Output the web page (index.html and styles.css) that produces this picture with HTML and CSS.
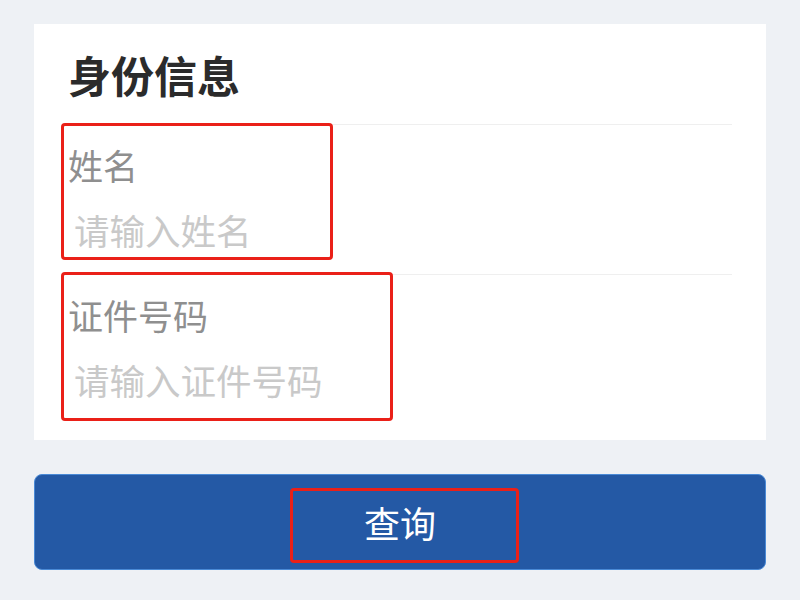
FILE: index.html
```html
<!DOCTYPE html>
<html lang="zh-CN">
<head>
<meta charset="utf-8">
<title>身份信息</title>
<link rel="stylesheet" href="styles.css">
</head>
<body>
  <main class="page">
    <section class="card">
      <h1 class="card-title">身份信息</h1>
      <div class="field">
        <label class="field-label" for="name">姓名</label>
        <input class="field-input" id="name" type="text" placeholder="请输入姓名">
        <span class="mark mark-name"></span>
      </div>
      <div class="field field-last">
        <label class="field-label" for="idno">证件号码</label>
        <input class="field-input" id="idno" type="text" placeholder="请输入证件号码">
        <span class="mark mark-id"></span>
      </div>
    </section>
    <button class="query-btn" type="button">
      <span class="query-text">查询</span>
      <span class="mark mark-btn"></span>
    </button>
  </main>
</body>
</html>
```
FILE: styles.css
```css
* {
  box-sizing: border-box;
}

html, body {
  margin: 0;
  padding: 0;
  background: #eef1f5;
}

body {
  width: 800px;
  height: 600px;
  overflow: hidden;
  font-family: "Noto Sans CJK SC", "Noto Sans", sans-serif;
}

.page {
  padding: 24px 34px 0;
  display: flex;
  flex-direction: column;
}

.card {
  background: #ffffff;
  padding: 0 34px 16px;
  display: flex;
  flex-direction: column;
}

.card-title {
  margin: 0;
  height: 101px;
  line-height: 101px;
  font-size: 43px;
  font-weight: 700;
  color: #2b2b2b;
  border-bottom: 1px solid #efefef;
}

.field {
  position: relative;
  display: flex;
  flex-direction: column;
  padding: 20px 0 22px;
  border-bottom: 1px solid #efefef;
}

.field-last {
  border-bottom: none;
}

.field-label {
  font-size: 35px;
  line-height: 40px;
  height: 40px;
  color: #8f8f8f;
}

.field-input {
  margin-top: 23px;
  height: 44px;
  border: none;
  outline: none;
  padding: 0 0 0 6px;
  background: transparent;
  font-family: inherit;
  font-size: 35.5px;
  line-height: 44px;
  color: #333;
}

.field-input::placeholder {
  color: #c9c9c9;
}

.mark {
  position: absolute;
  border: 3px solid #ea2018;
  border-radius: 4px;
  pointer-events: none;
}

.mark-name {
  top: -2px;
  left: -7px;
  width: 272px;
  height: 137px;
}

.mark-id {
  top: -3px;
  left: -7px;
  width: 332px;
  height: 149px;
}

.query-btn {
  position: relative;
  margin-top: 34px;
  height: 96px;
  width: 100%;
  border: 1.5px solid #4a8ad6;
  border-radius: 8px;
  background: #2459a5;
  color: #ffffff;
  font-family: inherit;
  font-size: 36px;
  display: flex;
  align-items: center;
  justify-content: center;
  padding: 0;
}

.query-text {
  line-height: 44px;
}

.mark-btn {
  top: 13px;
  left: 255px;
  width: 229px;
  height: 75px;
}
```
